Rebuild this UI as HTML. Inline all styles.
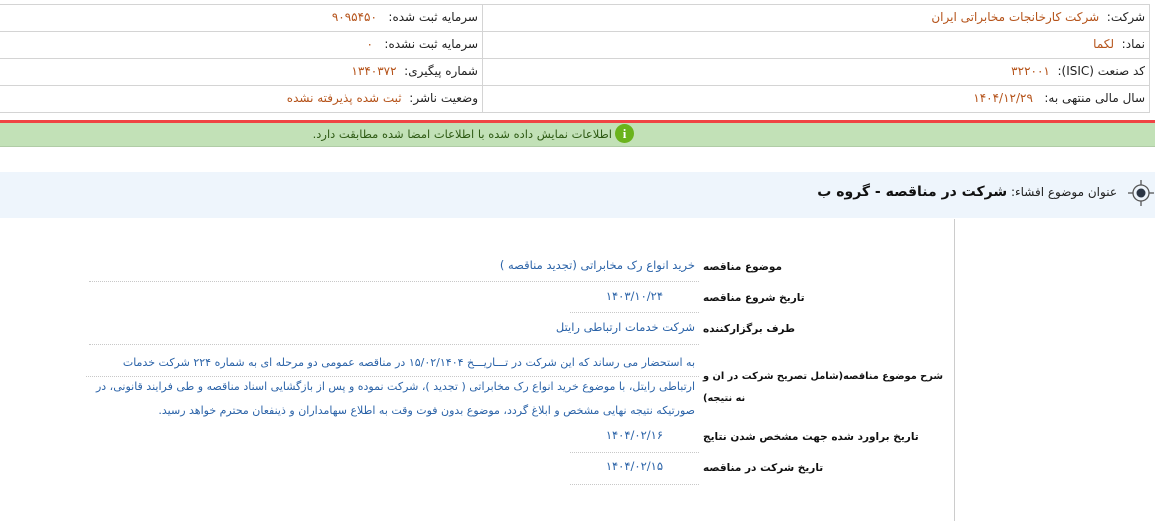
<!DOCTYPE html>
<html><head><meta charset="utf-8"><style>
*{margin:0;padding:0;box-sizing:border-box}
body{width:1155px;height:521px;background:#fff;position:relative;overflow:hidden;font-family:"DejaVu Sans","Noto Sans CJK SC",sans-serif;font-size:12px;color:#222}
.a{position:absolute;white-space:nowrap;direction:rtl}
.hl{position:absolute;height:1px;background:#d4d4d4}
.vl{position:absolute;width:1px;background:#d4d4d4}
.o{color:#b5531a}
.b{color:#2b63a8;font-size:11.5px}
.lb{font-weight:bold;color:#111;font-size:10.5px;left:703px;text-align:left}
.dot{position:absolute;height:0;border-top:1px dotted #c8c8c8}
</style></head><body>
<div class="hl" style="left:0;top:4px;width:1150px"></div>
<div class="hl" style="left:0;top:31px;width:1150px"></div>
<div class="hl" style="left:0;top:58px;width:1150px"></div>
<div class="hl" style="left:0;top:85px;width:1150px"></div>
<div class="hl" style="left:0;top:112px;width:1150px"></div>
<div class="vl" style="left:482px;top:4px;height:108px"></div>
<div class="vl" style="left:1149px;top:4px;height:108px"></div>

<div class="a" style="right:10px;top:10px">شرکت:&nbsp;&nbsp;<span class="o">شرکت کارخانجات مخابراتی ایران</span></div>
<div class="a" style="right:10px;top:37px">نماد:&nbsp;&nbsp;<span class="o">لکما</span></div>
<div class="a" style="right:10px;top:64px">کد صنعت (ISIC):&nbsp;&nbsp;<span class="o">۳۲۲۰۰۱</span></div>
<div class="a" style="right:10px;top:91px">سال مالی منتهی به:&nbsp;&nbsp;&nbsp;<span class="o">۱۴۰۴/۱۲/۲۹</span></div>

<div class="a" style="right:677px;top:10px">سرمایه ثبت شده:&nbsp;&nbsp;&nbsp;<span class="o">۹۰۹۵۴۵۰</span></div>
<div class="a" style="right:677px;top:37px">سرمایه ثبت نشده:&nbsp;&nbsp;&nbsp;<span class="o">۰</span></div>
<div class="a" style="right:677px;top:64px">شماره پیگیری:&nbsp;&nbsp;<span class="o">۱۳۴۰۳۷۲</span></div>
<div class="a" style="right:677px;top:91px">وضعیت ناشر:&nbsp;&nbsp;<span class="o">ثبت شده پذیرفته نشده</span></div>

<div style="position:absolute;left:0;top:120px;width:1155px;height:3px;background:#f04444"></div>
<div style="position:absolute;left:0;top:123px;width:1155px;height:24px;background:#c2e1b7;border-bottom:1px solid #b0cca6"></div>
<div style="position:absolute;left:615px;top:124px;width:19px;height:19px;border-radius:50%;background:#6ab31c;color:#fff;font-weight:bold;text-align:center;line-height:19px;font-size:13px;font-family:'Liberation Serif',serif">i</div>
<div class="a" style="right:543px;top:127px;color:#2e5a14;font-size:11.5px">اطلاعات نمایش داده شده با اطلاعات امضا شده مطابقت دارد.</div>

<div style="position:absolute;left:0;top:172px;width:1155px;height:46px;background:#eef5fc"></div>
<svg style="position:absolute;left:1126px;top:178px" width="30" height="30" viewBox="0 0 30 30">
<circle cx="15" cy="15" r="8" fill="none" stroke="#555" stroke-width="1.3"/>
<circle cx="15" cy="15" r="4.5" fill="#2c3645"/>
<line x1="15" y1="2" x2="15" y2="7" stroke="#555" stroke-width="1.3"/>
<line x1="15" y1="23" x2="15" y2="28" stroke="#555" stroke-width="1.3"/>
<line x1="2" y1="15" x2="7" y2="15" stroke="#555" stroke-width="1.3"/>
<line x1="23" y1="15" x2="28" y2="15" stroke="#555" stroke-width="1.3"/>
</svg>
<div class="a" style="right:38px;top:184px;font-size:12px">عنوان موضوع افشاء: <span style="font-weight:bold;font-size:14px;color:#111">شرکت در مناقصه - گروه ب</span></div>

<div class="vl" style="left:954px;top:219px;height:302px;background:#ccc"></div>

<div class="a lb" style="top:261px">موضوع مناقصه</div>
<div class="a b" style="right:460px;top:258px">خرید انواع رک مخابراتی (تجدید مناقصه )</div>
<div class="dot" style="left:89px;top:281px;width:610px"></div>

<div class="a lb" style="top:292px">تاریخ شروع مناقصه</div>
<div class="a b" style="right:492px;top:289px">۱۴۰۳/۱۰/۲۴</div>
<div class="dot" style="left:570px;top:312px;width:129px"></div>

<div class="a lb" style="top:323px">طرف برگزارکننده</div>
<div class="a b" style="right:460px;top:320px">شرکت خدمات ارتباطی رایتل</div>
<div class="dot" style="left:89px;top:344px;width:610px"></div>

<div class="a lb" style="top:366px;line-height:22px;font-size:9.8px">شرح موضوع مناقصه(شامل تصریح شرکت در ان و<br>نه نتیجه)</div>
<div class="a b" style="right:460px;top:351px;line-height:24px;font-size:11px;text-align:right">به استحضار می رساند که این شرکت در تـــاریـــخ ۱۵/۰۲/۱۴۰۴ در مناقصه عمومی دو مرحله ای به شماره ۲۲۴ شرکت خدمات<br>ارتباطی رایتل، با موضوع خرید انواع رک مخابراتی ( تجدید )، شرکت نموده و پس از بازگشایی اسناد مناقصه و طی فرایند قانونی، در<br>صورتیکه نتیجه نهایی مشخص و ابلاغ گردد، موضوع بدون فوت وقت به اطلاع سهامداران و ذینفعان محترم خواهد رسید.</div>
<div class="dot" style="left:86px;top:376px;width:613px"></div>

<div class="a lb" style="top:431px">تاریخ براورد شده جهت مشخص شدن نتایج</div>
<div class="a b" style="right:492px;top:428px">۱۴۰۴/۰۲/۱۶</div>
<div class="dot" style="left:570px;top:452px;width:129px"></div>

<div class="a lb" style="top:462px">تاریخ شرکت در مناقصه</div>
<div class="a b" style="right:492px;top:459px">۱۴۰۴/۰۲/۱۵</div>
<div class="dot" style="left:570px;top:484px;width:129px"></div>
</body></html>
